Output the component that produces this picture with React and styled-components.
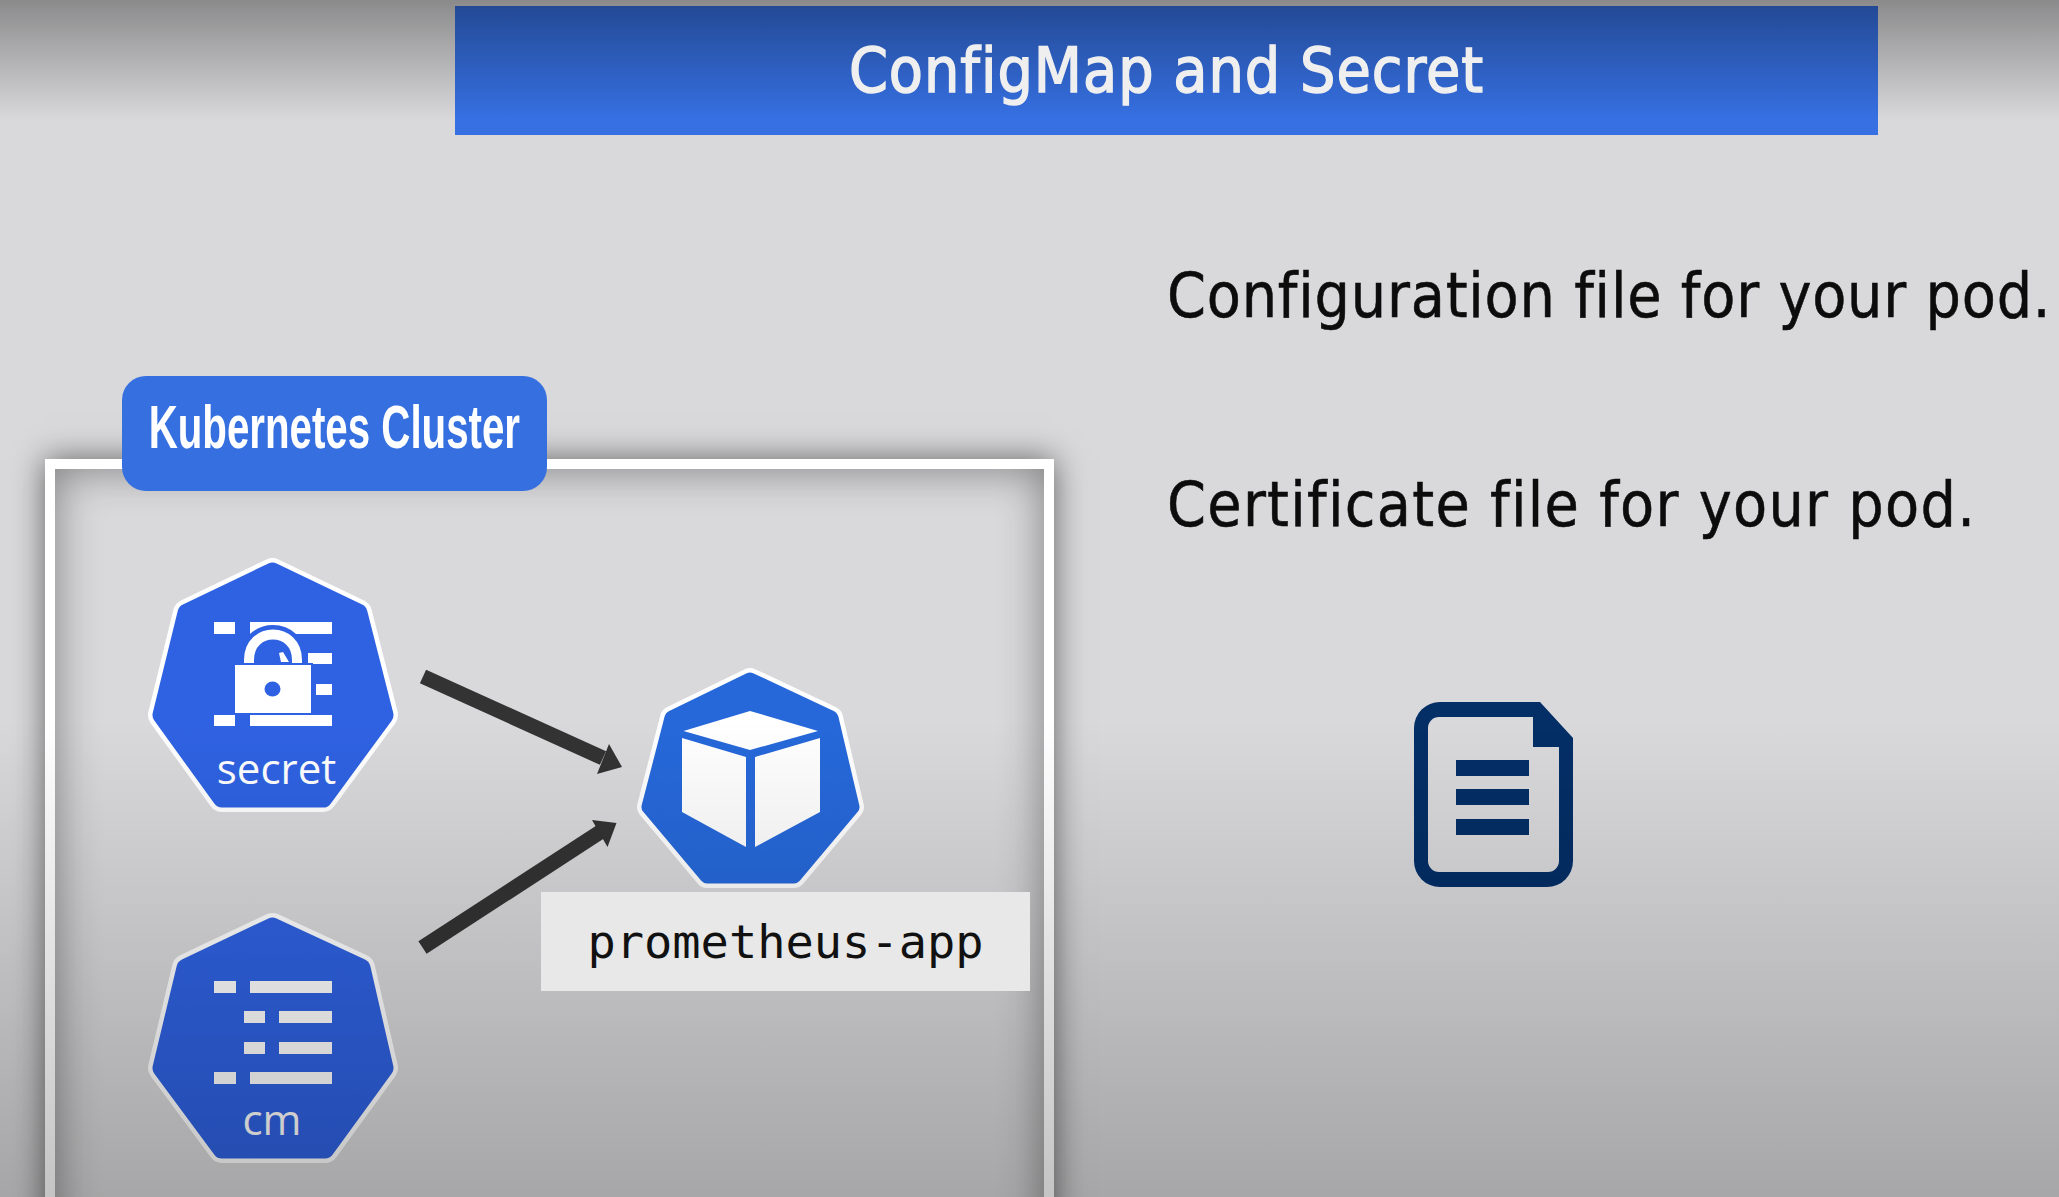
import styled, { createGlobalStyle } from "styled-components";

const GlobalStyle = createGlobalStyle`
  html, body {
    margin: 0;
    padding: 0;
    background: #d9d8da;
  }
`;

const App = () => {
  return (
    <Page>
      <GlobalStyle />
      <TitleBar>
        <TitleText>ConfigMap and Secret</TitleText>
      </TitleBar>
      <Content>
        <Frame>
          <Badge>
            <BadgeText>Kubernetes Cluster</BadgeText>
          </Badge>
          <SecretNode />
          <ConfigMapNode />
          <Arrows />
          <PodNode />
          <PodLabel>prometheus-app</PodLabel>
        </Frame>
        <Notes>
          <Note $tracking={0.8}>Configuration file for your pod.</Note>
          <Note $tracking={1.3}>Certificate file for your pod.</Note>
          <DocumentIcon />
        </Notes>
      </Content>
    </Page>
  );
};
export default App;

// Nodes, viewBox is in page pixels so they are easy to compare with the slide

const Heptagon = ({ points, fill, radius = 14 }) => (
  <>
    <polygon points={points} fill="#ffffff" stroke="#ffffff" strokeWidth={radius * 2} strokeLinejoin="round" />
    <polygon points={points} fill={fill} stroke={fill} strokeWidth={radius * 2 - 9} strokeLinejoin="round" />
  </>
);

const SecretNode = () => (
  <NodeSvg $left={85} $top={81} width="268" height="270" viewBox="140 550 268 270">
    <Heptagon
      fill="#2f62e2"
      points="272.5,572 358,613 384,715 323,798 222,798 162,715 187,613"
    />
    <g fill="#ffffff">
      <rect x="214" y="622" width="21" height="12" />
      <rect x="250" y="622" width="82" height="12" />
      <rect x="308" y="653" width="24" height="11" />
      <rect x="316" y="684" width="16" height="11" />
      <rect x="214" y="715" width="21" height="11" />
      <rect x="250" y="715" width="82" height="11" />
    </g>
    <path d="M249 668 V660 C249 626 297 626 297 660 V668" fill="none" stroke="#2f62e2" strokeWidth="19" />
    <path d="M249 668 V660 C249 626 297 626 297 660 V668" fill="none" stroke="#ffffff" strokeWidth="10" />
    <polygon points="279,653 283,652 289,662 281,662" fill="#ffffff" />
    <rect x="233" y="663" width="80" height="52" fill="#2f62e2" />
    <rect x="235" y="665" width="76" height="48" fill="#ffffff" />
    <ellipse cx="272.5" cy="689" rx="8" ry="7.5" fill="#2f62e2" />
    <NodeText x="276.5" y="784">secret</NodeText>
  </NodeSvg>
);

const ConfigMapNode = () => (
  <NodeSvg $left={85} $top={436} width="268" height="270" viewBox="140 905 268 270">
    <Heptagon
      fill="#2f62e2"
      points="272.5,927 361,968 384,1068 325,1149 222,1149 162,1068 186,968"
    />
    <g fill="#ffffff">
      <rect x="214" y="981" width="22" height="12" />
      <rect x="250" y="981" width="82" height="12" />
      <rect x="244" y="1011" width="21" height="12" />
      <rect x="279" y="1011" width="53" height="12" />
      <rect x="244" y="1042" width="21" height="12" />
      <rect x="279" y="1042" width="53" height="12" />
      <rect x="214" y="1072" width="22" height="12" />
      <rect x="250" y="1072" width="82" height="12" />
    </g>
    <NodeText x="272" y="1135">cm</NodeText>
  </NodeSvg>
);

const PodNode = () => (
  <NodeSvg $left={575} $top={192} width="240" height="230" viewBox="630 661 240 230">
    <Heptagon
      fill="#2668da"
      radius={12}
      points="750,680 831,718 852,807 794,876 707,876 649,807 672,718"
    />
    <g fill="#ffffff">
      <polygon points="750,711 818,731 750,750 683.5,731" />
      <polygon points="682,738 746,757 746,847 682,812" />
      <polygon points="755,757 820,738 820,812 755,847" />
    </g>
  </NodeSvg>
);

const Arrows = () => (
  <ArrowSvg width="240" height="300" viewBox="410 660 240 300">
    <g fill="#333333">
      <polygon points="419.9,683.3 426.1,669.7 606.1,751.2 599.9,764.8" />
      <polygon points="622,767 609,744 597,774" />
      <polygon points="418.4,941.2 426.6,953.8 605.1,837.8 596.9,825.2" />
      <polygon points="616.5,823 592,820 607.5,847" />
    </g>
  </ArrowSvg>
);

const DocumentIcon = () => (
  <DocumentSvg width="159" height="185" viewBox="0 0 159 185">
    <path
      fillRule="evenodd"
      d="M26 0 H126 L159 36 V159 A26 26 0 0 1 133 185 H26 A26 26 0 0 1 0 159 V26 A26 26 0 0 1 26 0 Z M25 15 A11 11 0 0 0 14 26 V159 A11 11 0 0 0 25 170 H134 A11 11 0 0 0 145 159 V45 H119 V15 Z"
    />
    <rect x="42" y="58" width="73" height="16" />
    <rect x="42" y="87" width="73" height="16" />
    <rect x="42" y="117" width="73" height="16" />
  </DocumentSvg>
);

// Page

const Page = styled.main`
  position: relative;
  width: 2059px;
  height: 1197px;
  overflow: hidden;
  padding-top: 6px;
  box-sizing: border-box;
  background: #d9d8da;

  /* the player shading over the video frame */
  &::after {
    content: "";
    position: absolute;
    inset: 0;
    pointer-events: none;
    background: linear-gradient(
        to bottom,
        rgba(0, 0, 0, 0.36) 0,
        rgba(0, 0, 0, 0) 120px
      ),
      linear-gradient(
        to bottom,
        rgba(0, 0, 0, 0) 720px,
        rgba(0, 0, 0, 0.23) 1197px
      );
  }
`;

const TitleBar = styled.h1`
  display: flex;
  align-items: center;
  justify-content: center;
  box-sizing: border-box;
  width: 1423px;
  height: 129px;
  margin: 0 0 0 455px;
  background: #3670e3;
`;

const TitleText = styled.span`
  position: relative;
  z-index: 1;
  color: #efefef;
  font-family: "DejaVu Sans Condensed", "DejaVu Sans", sans-serif;
  font-size: 62px;
  font-weight: 400;
  letter-spacing: 1px;
  -webkit-text-stroke: 1.4px #efefef;
`;

const Content = styled.div`
  display: flex;
  align-items: flex-start;
  padding-left: 45px;
`;

const Frame = styled.section`
  position: relative;
  flex: none;
  box-sizing: border-box;
  width: 1009px;
  height: 800px;
  margin-top: 324px;
  border: 10px solid #ffffff;
  box-shadow: 0 0 30px rgba(0, 0, 0, 0.55), inset 0 0 44px rgba(0, 0, 0, 0.42);
`;

const Badge = styled.div`
  position: absolute;
  left: 67px;
  top: -93px;
  display: flex;
  align-items: center;
  justify-content: center;
  width: 425px;
  height: 115px;
  padding-bottom: 14px;
  box-sizing: border-box;
  border-radius: 24px;
  background: #3670e0;
`;

const BadgeText = styled.span`
  display: inline-block;
  flex: none;
  color: #ffffff;
  font-family: "Liberation Sans", sans-serif;
  font-size: 61px;
  font-weight: 700;
  white-space: nowrap;
  transform: scaleX(0.66);
`;

const NodeSvg = styled.svg`
  position: absolute;
  left: ${(p) => p.$left}px;
  top: ${(p) => p.$top}px;
`;

const NodeText = styled.text`
  fill: #ffffff;
  font-family: "Open Sans", sans-serif;
  font-size: 42px;
  text-anchor: middle;
`;

const ArrowSvg = styled.svg`
  position: absolute;
  left: 355px;
  top: 191px;
`;

const PodLabel = styled.div`
  position: absolute;
  z-index: 1;
  left: 486px;
  top: 423px;
  display: flex;
  align-items: center;
  justify-content: center;
  width: 489px;
  height: 99px;
  background: #e8e8e8;
  color: #111111;
  font-family: "DejaVu Sans Mono", monospace;
  font-size: 47px;
`;

const Notes = styled.div`
  display: flex;
  flex-direction: column;
  padding: 126px 0 0 113px;
`;

const Note = styled.p`
  margin: 0 0 139px;
  color: #0c0c0c;
  font-family: "DejaVu Sans Condensed", "DejaVu Sans", sans-serif;
  font-size: 62px;
  line-height: 70px;
  letter-spacing: ${(p) => p.$tracking}px;
  white-space: nowrap;
  -webkit-text-stroke: 0.5px #0c0c0c;
`;

const DocumentSvg = styled.svg`
  margin: 23px 0 0 247px;
  fill: #032e66;
`;
